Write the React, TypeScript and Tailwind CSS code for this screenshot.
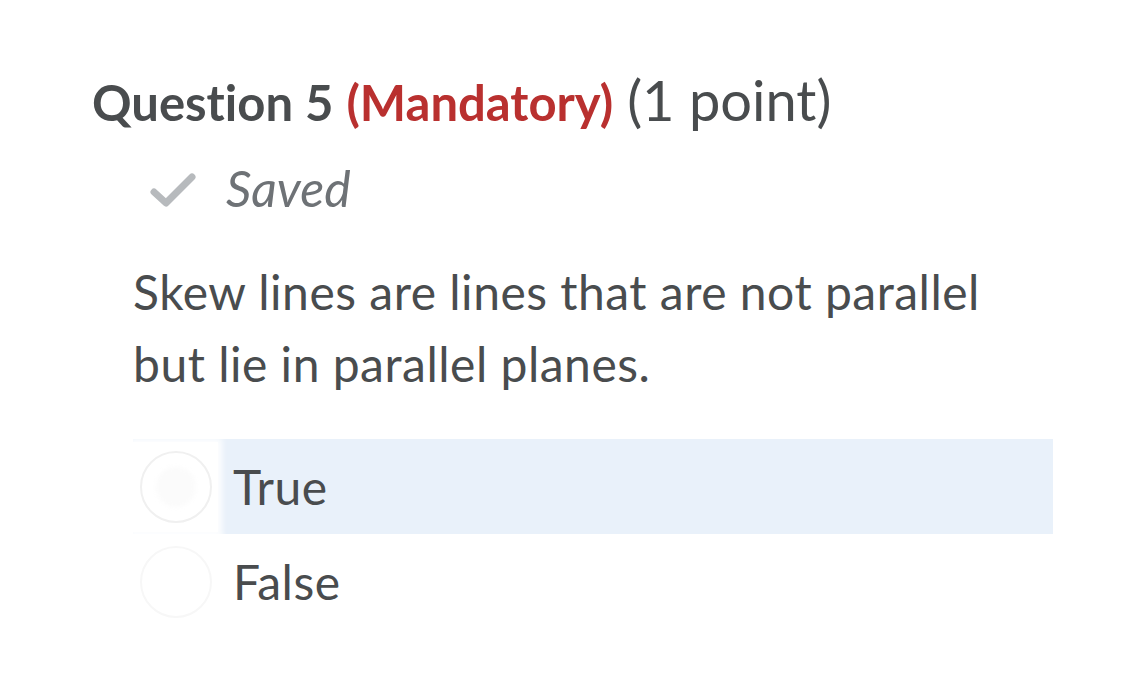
import React from "react";

const text = "text-[#494c4e]";

function Radio({ checked }: { checked?: boolean }) {
  return (
    <div className="flex h-[90px] w-[85px] shrink-0 items-center justify-center bg-white shadow-[0_0_6px_4px_rgba(255,255,255,0.9)]">
      <div
        className={
          "h-[72px] w-[72px] rounded-full border-[2px] blur-[0.6px] " +
          (checked ? "border-[#f0f0f0]" : "border-[#f7f7f7]")
        }
      >
        {checked && <div className="m-[14px] h-[40px] w-[40px] rounded-full bg-[#fbfbfb] blur-[2px]" />}
      </div>
    </div>
  );
}

export default function App() {
  return (
    <div
      className="min-h-[698px] w-[1125px] bg-white [font-variant-ligatures:none]"
      style={{ fontFamily: "Lato, 'Noto Sans', sans-serif" }}
    >
      <div className="pl-[92px] pt-[70px]">
        <h2 className={"flex items-baseline text-[49px] leading-[60px] " + text}>
          <span className="font-bold">Question 5</span>
          <span className="ml-[13px] font-bold text-[#b9302f]">(Mandatory)</span>
          <span className="ml-[14px] text-[56px] font-normal">(1 point)</span>
        </h2>

        <div className="mt-[28px] flex items-center pl-[58px]">
          <svg width="46" height="36" viewBox="0 0 46 36" className="mr-[30px] mt-[4px]">
            <path
              d="M4 20 L16 31 L42 5"
              fill="none"
              stroke="#b7babd"
              strokeWidth="7"
              strokeLinecap="round"
              strokeLinejoin="round"
            />
          </svg>
          <span className="text-[50px] italic leading-[56px] text-[#6e7276]">Saved</span>
        </div>

        <div className="pl-[41px]">
          <p className={"mt-[40px] w-[900px] text-[48px] leading-[72px] tracking-[0.5px] " + text}>
            Skew lines are lines that are not parallel but lie in parallel planes.
          </p>

          <div className="mt-[39px] w-[920px]">
            <label className="flex h-[95px] items-center bg-[#e9f1fa]">
              <Radio checked />
              <span className={"pl-[15px] text-[48px] tracking-[0.5px] " + text}>True</span>
            </label>
            <label className="flex h-[95px] items-center">
              <Radio />
              <span className={"pl-[15px] text-[48px] tracking-[0.5px] " + text}>False</span>
            </label>
          </div>
        </div>
      </div>
    </div>
  );
}
